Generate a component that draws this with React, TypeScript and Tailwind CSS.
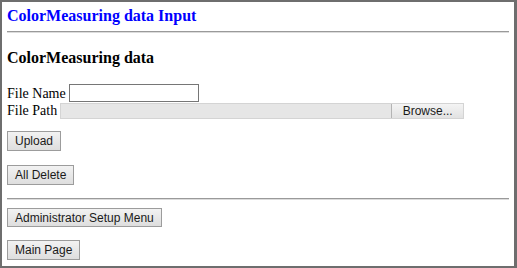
import React from "react";

const btn =
  "block border border-[#9c9c9c] bg-gradient-to-b from-[#f2f2f2] to-[#dedede] px-[7px] text-[12px] leading-[16px] text-[#1a1a1a] [font-family:'Liberation_Sans',Arial,sans-serif]";

export default function App() {
  return (
    <div className="box-border h-[268px] w-[517px] border-2 border-r-[3px] border-[#6e6e6e] bg-white px-[5px] text-black [font-family:'Liberation_Serif','Times_New_Roman',serif]">
      <h1 className="mt-[4px] text-[16px] font-bold leading-[20px] text-[#0000ff]">ColorMeasuring data Input</h1>
      <div className="mt-[5px] border-t border-b border-t-[#9a9a9a] border-b-[#dcdcdc]" />

      <h2 className="mt-[15px] text-[16px] font-bold leading-[20px]">ColorMeasuring data</h2>

      <div className="mt-[16px] flex items-center text-[14px] leading-[17px]">
        <span>File Name</span>
        <div className="ml-[3px] h-[18px] w-[130px] border border-[#767676] bg-white" />
      </div>
      <div className="flex items-center text-[14px] leading-[17px]">
        <span>File Path</span>
        <div className="ml-[3px] flex h-[16px] w-[404px] border border-[#d4d4d4] bg-[#e6e6e6]">
          <div className="flex-1" />
          <div className="flex w-[72px] items-center justify-center border-l border-[#b4b4b4] bg-gradient-to-b from-[#f4f4f4] to-[#e2e2e2] text-[12px] leading-[14px] text-[#1a1a1a] [font-family:'Liberation_Sans',Arial,sans-serif]">
            Browse...
          </div>
        </div>
      </div>

      <button type="button" className={`${btn} mt-[12px] h-[20px]`}>Upload</button>
      <button type="button" className={`${btn} mt-[14px] h-[20px]`}>All Delete</button>

      <div className="mt-[13px] border-t border-b border-t-[#9a9a9a] border-b-[#dcdcdc]" />

      <button type="button" className={`${btn} mt-[8px] h-[19px] px-[6px]`}>Administrator Setup Menu</button>
      <button type="button" className={`${btn} mt-[13px] h-[20px]`}>Main Page</button>
    </div>
  );
}
